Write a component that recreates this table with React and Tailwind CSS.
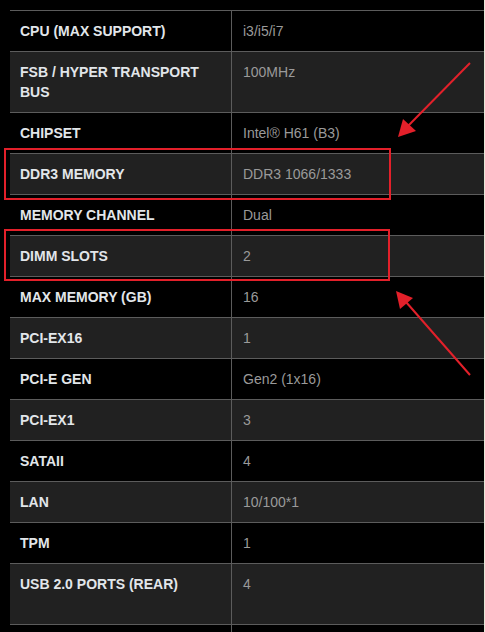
import React from "react";

const specs = [
  ["CPU (MAX SUPPORT)", "i3/i5/i7"],
  ["FSB / HYPER TRANSPORT BUS", "100MHz"],
  ["CHIPSET", "Intel® H61 (B3)"],
  ["DDR3 MEMORY", "DDR3 1066/1333"],
  ["MEMORY CHANNEL", "Dual"],
  ["DIMM SLOTS", "2"],
  ["MAX MEMORY (GB)", "16"],
  ["PCI-EX16", "1"],
  ["PCI-E GEN", "Gen2 (1x16)"],
  ["PCI-EX1", "3"],
  ["SATAII", "4"],
  ["LAN", "10/100*1"],
  ["TPM", "1"],
  ["USB 2.0 PORTS (REAR)", "4"],
];

const Annotations = () => (
  <svg
    className="absolute left-0 top-0 pointer-events-none"
    width="485"
    height="632"
    viewBox="0 0 485 632"
  >
    <rect x="5" y="149" width="385" height="50" fill="none" stroke="#e3202a" strokeWidth="2" />
    <rect x="5" y="230" width="384" height="50" fill="none" stroke="#e3202a" strokeWidth="2" />
    {/* arrow to chipset/ddr3 */}
    <line x1="470" y1="63" x2="408" y2="126" stroke="#e3202a" strokeWidth="2" />
    <polygon points="398,137 403,119 416,131" fill="#e3202a" />
    {/* arrow to dimm slots */}
    <line x1="470" y1="375" x2="406" y2="302" stroke="#e3202a" strokeWidth="2" />
    <polygon points="396,291 413,298 400,309" fill="#e3202a" />
  </svg>
);

export default function App() {
  return (
    <div className="relative w-[485px] h-[632px] bg-black overflow-hidden pl-[10px] pt-[10px] font-['Liberation_Sans',Arial,sans-serif] text-[14px] leading-5">
      <div className="w-[474px] border-b border-[#5c5c5c]">
        {specs.map(([label, value], i) => (
          <div
            key={label}
            className={`grid grid-cols-[222px_1fr] border-t border-[#5c5c5c] ${
              i % 2 === 1 ? "bg-[#212121]" : "bg-black"
            } ${i === specs.length - 1 ? "min-h-[61px]" : ""}`}
          >
            <div className="border-r border-[#5c5c5c] pl-[10px] pr-3 pt-[10px] pb-[10px] font-bold text-[#e2e6ea]">
              {label === "FSB / HYPER TRANSPORT BUS" ? (
                <>
                  FSB / HYPER TRANSPORT
                  <br />
                  BUS
                </>
              ) : (
                label
              )}
            </div>
            <div className="pl-[11px] pt-[10px] pb-[10px] text-[#9a9a9a]">{value}</div>
          </div>
        ))}
      </div>
      <div className="ml-[221px] w-px h-10 bg-[#5c5c5c]" />
      <div className="absolute right-0 top-0 w-px h-full bg-[#e8e8d8]" />
      <Annotations />
    </div>
  );
}
